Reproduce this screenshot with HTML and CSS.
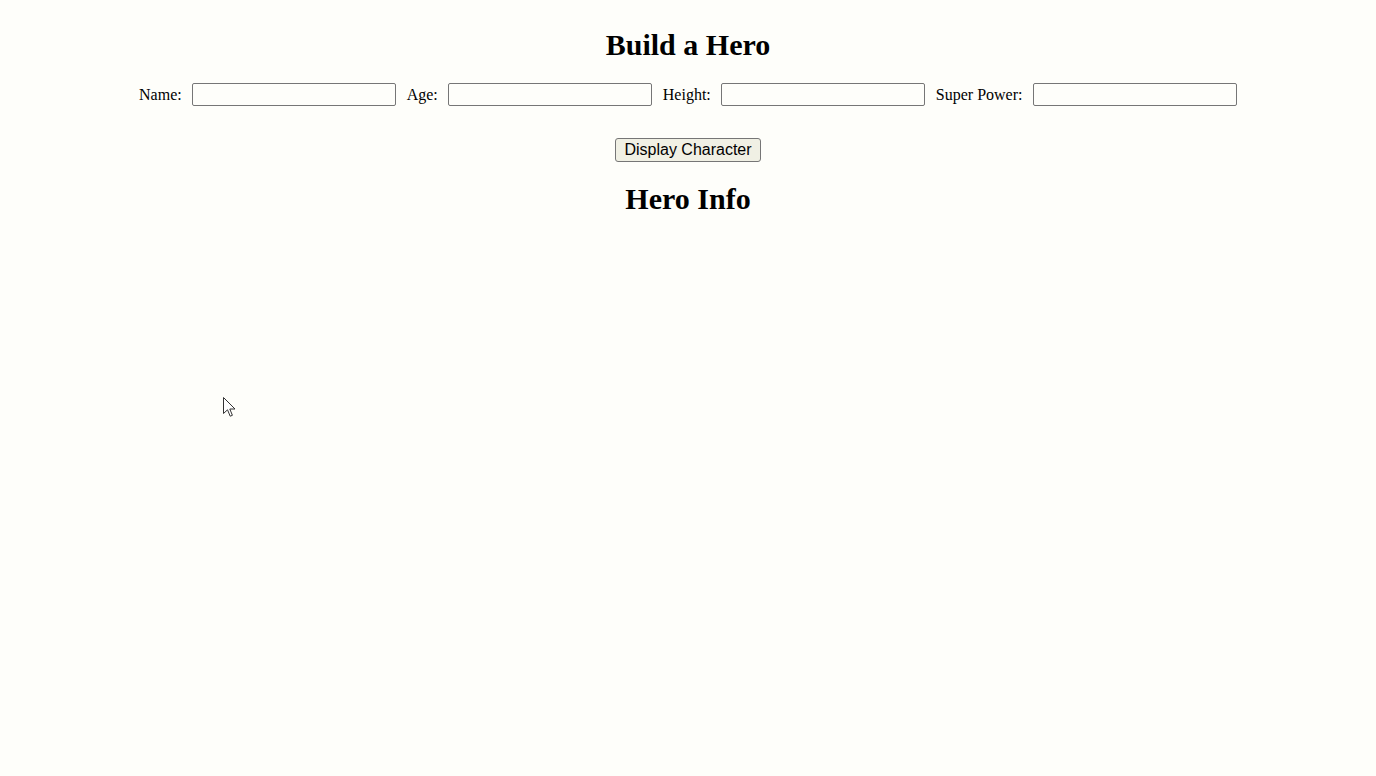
FILE: index.html
```html
<!DOCTYPE html>
<html lang="en">
<head>
<meta charset="utf-8">
<title>Build a Hero</title>
<link rel="stylesheet" href="styles.css">
</head>
<body>
  <h1 class="title">Build a Hero</h1>
  <form class="hero-form">
    <label class="field-label" for="name">Name:</label>
    <input class="field" id="name" type="text">
    <label class="field-label" for="age">Age:</label>
    <input class="field" id="age" type="text">
    <label class="field-label" for="height">Height:</label>
    <input class="field" id="height" type="text">
    <label class="field-label" for="power">Super Power:</label>
    <input class="field" id="power" type="text">
  </form>
  <div class="actions">
    <button class="display-btn" type="button">Display Character</button>
  </div>
  <h2 class="info-title">Hero Info</h2>
  <svg class="cursor" width="13" height="21" viewBox="0 0 13 21" aria-hidden="true">
    <path d="M0.5 0.5 L0.5 16.5 L4.5 12.8 L7.2 19.2 L9.4 18.3 L6.8 12 L12 12 Z" fill="#ffffff" stroke="#333333" stroke-width="1" stroke-linejoin="miter"/>
  </svg>
</body>
</html>
```

FILE: styles.css
```css
html, body {
  margin: 0;
  padding: 0;
}

body {
  background-color: #fefefa;
  font-family: "Liberation Serif", "Times New Roman", serif;
  color: #000;
  min-height: 776px;
  position: relative;
}

.title {
  margin: 0;
  padding-top: 28px;
  font-size: 30px;
  line-height: 34px;
  font-weight: bold;
  text-align: center;
}

.hero-form {
  margin: 21px 0 0;
  display: flex;
  justify-content: center;
  align-items: center;
  gap: 10.5px;
  font-size: 16px;
}

.field-label {
  line-height: 23px;
}

.field {
  box-sizing: border-box;
  width: 204px;
  height: 23px;
  margin: 0;
  border: 1px solid #767676;
  border-radius: 2px;
  background: transparent;
  padding: 1px 2px;
  font-size: 13.33px;
}

.actions {
  margin-top: 32px;
  display: flex;
  justify-content: center;
}

.display-btn {
  box-sizing: border-box;
  width: 146px;
  height: 24px;
  margin: 0;
  padding: 0 4px;
  border: 1px solid #767676;
  border-radius: 3px;
  background: #f0f0e4;
  font-family: "Liberation Sans", Arial, sans-serif;
  font-size: 16px;
  color: #000;
  line-height: 20px;
}

.info-title {
  margin: 20px 0 0;
  font-size: 30px;
  line-height: 34px;
  font-weight: bold;
  text-align: center;
}

.cursor {
  position: absolute;
  left: 223px;
  top: 397px;
}
```
